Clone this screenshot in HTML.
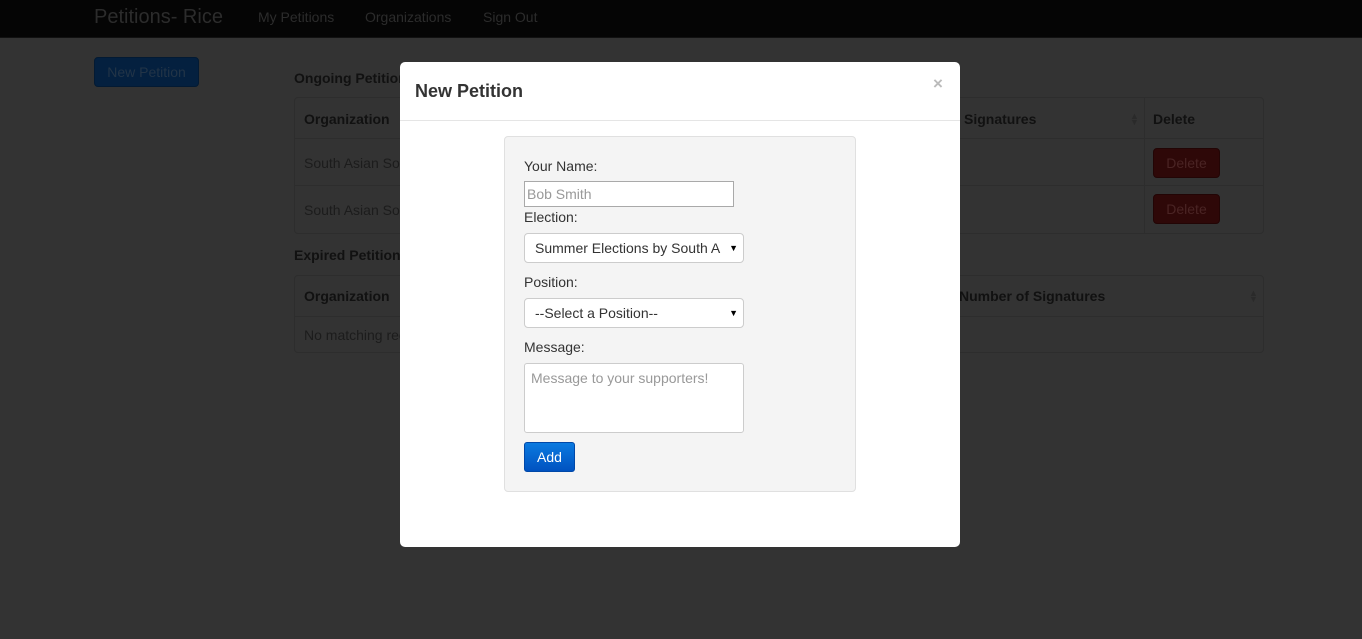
<!DOCTYPE html>
<html><head><style>
*{box-sizing:border-box;margin:0;padding:0}
body{width:1362px;height:639px;background:#333;font-family:"Liberation Sans",Arial,sans-serif;font-size:14px;position:relative;overflow:hidden}
.a{position:absolute}
.nav{left:0;top:0;width:1362px;height:38px;background:#050505;border-bottom:1px solid #111}
.brand{left:94px;top:6px;font-size:20px;color:#2c2c2c}
.nl{top:9px;font-size:14px;color:#2c2c2c}
.np{left:94px;top:57px;width:105px;height:30px;background:#04203f;border:1px solid #031a33;border-radius:4px;color:#223447;text-align:center;line-height:28px}
.h{font-weight:bold;color:#111;font-size:14px}
.tbl{border:1px solid #2d2d2d;border-radius:4px;left:294px;width:970px}
.row{position:absolute;left:0;width:968px;border-top:1px solid #2d2d2d}
.txt{color:#1c1c1c}
.del{width:67px;height:30px;background:#2e0808;border:1px solid #220505;border-radius:4px;color:#4a2424;text-align:center;line-height:28px}
.modal{left:400px;top:62px;width:560px;height:485px;background:#fff;border-radius:5px}
.mh{left:0;top:0;width:560px;height:59px;border-bottom:1px solid #e5e5e5}
.well{left:104px;top:74px;width:352px;height:356px;background:#f4f4f4;border:1px solid #e0e0e0;border-radius:4px}
.lbl{color:#333;font-size:14px;left:19px}
.sel{left:19px;width:220px;height:30px;background:#fff;border:1px solid #ccc;border-radius:4px;color:#333;padding-left:10px;line-height:28px;overflow:hidden;white-space:nowrap}
.sel:after{content:"▼";position:absolute;right:5px;top:0;font-size:9px;color:#000}
</style></head><body>
<div class="a nav"></div>
<div class="a brand">Petitions- Rice</div>
<div class="a nl" style="left:258px">My Petitions</div>
<div class="a nl" style="left:365px">Organizations</div>
<div class="a nl" style="left:483px">Sign Out</div>
<div class="a np">New Petition</div>

<div class="a h" style="left:294px;top:70px">Ongoing Petitions</div>
<div class="a tbl" style="top:97px;height:137px">
 <div class="a h" style="left:9px;top:13px">Organization</div>
 <div class="a h" style="left:669px;top:13px">Signatures</div>
 <div class="a" style="left:835px;top:15px;color:#2a2a2a;font-size:9px;line-height:6px">▲<br>▼</div>
 <div class="a" style="left:849px;top:0;height:135px;border-left:1px solid #2d2d2d"></div>
 <div class="a h" style="left:858px;top:13px">Delete</div>
 <div class="row" style="top:40px"></div>
 <div class="a txt" style="left:9px;top:57px">South Asian Society</div>
 <div class="a del" style="left:858px;top:50px">Delete</div>
 <div class="row" style="top:87px"></div>
 <div class="a txt" style="left:9px;top:104px">South Asian Society</div>
 <div class="a del" style="left:858px;top:96px">Delete</div>
</div>
<div class="a h" style="left:294px;top:247px">Expired Petitions</div>
<div class="a tbl" style="top:275px;height:78px">
 <div class="a h" style="left:9px;top:12px">Organization</div>
 <div class="a h" style="left:664px;top:12px">Number of Signatures</div>
 <div class="a" style="left:954px;top:14px;color:#2a2a2a;font-size:9px;line-height:6px">▲<br>▼</div>
 <div class="row" style="top:40px"></div>
 <div class="a txt" style="left:9px;top:51px">No matching records found</div>
</div>

<div class="a modal">
 <div class="a mh"></div>
 <div class="a" style="left:15px;top:19px;font-size:18px;font-weight:bold;color:#333">New Petition</div>
 <div class="a" style="left:533px;top:12px;font-size:17px;font-weight:bold;color:#bbb">×</div>
 <div class="a well">
  <div class="a lbl" style="top:21px">Your Name:</div>
  <div class="a" style="left:19px;top:44px;width:210px;height:26px;border:1px solid #a9a9a9;background:#fff;color:#999;padding-left:2px;line-height:24px">Bob Smith</div>
  <div class="a lbl" style="top:72px">Election:</div>
  <div class="a sel" style="top:96px">Summer Elections by South A</div>
  <div class="a lbl" style="top:137px">Position:</div>
  <div class="a sel" style="top:161px">--Select a Position--</div>
  <div class="a lbl" style="top:202px">Message:</div>
  <div class="a" style="left:19px;top:226px;width:220px;height:70px;border:1px solid #ccc;border-radius:3px;background:#fff;color:#999;padding:6px;">Message to your supporters!</div>
  <div class="a" style="left:19px;top:305px;width:51px;height:30px;background:linear-gradient(#0a7ae0,#0052c0);border:1px solid #0048a8;border-radius:3px;color:#fff;text-align:center;line-height:28px">Add</div>
 </div>
</div>
</body></html>
